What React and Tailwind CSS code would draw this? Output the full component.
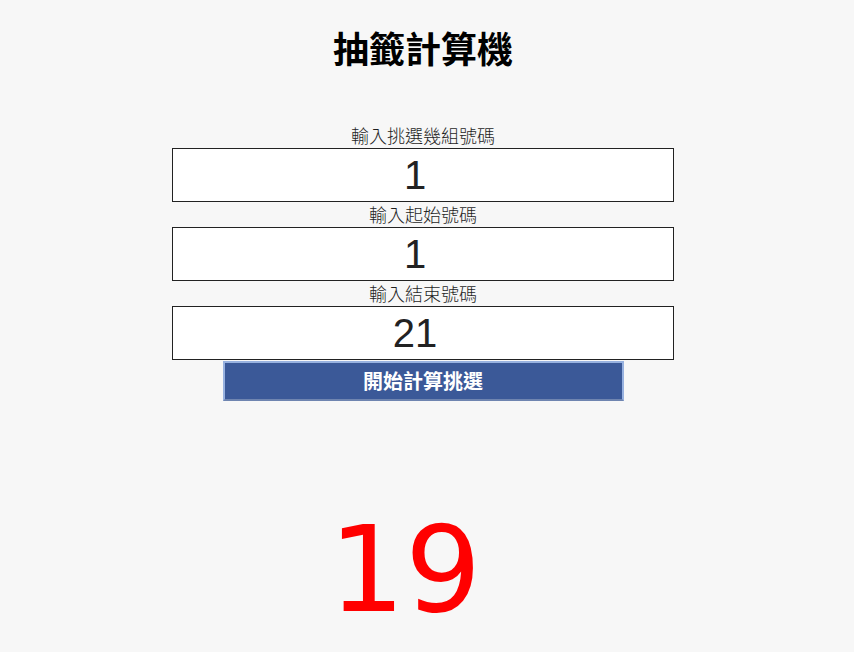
export default function App() {
  const fields = [
    { label: "輸入挑選幾組號碼", value: "1" },
    { label: "輸入起始號碼", value: "1" },
    { label: "輸入結束號碼", value: "21" },
  ];

  return (
    <main className="min-h-[652px] w-full bg-[#f7f7f7] pr-2 font-['Noto_Sans_CJK_TC',sans-serif]">
      <div className="flex flex-col items-center pt-[29px]">
        <h1 className="text-[36px] leading-[36px] font-bold text-black">
          抽籤計算機
        </h1>

        <div className="mt-[58px] flex flex-col items-center">
          {fields.map((field) => (
            <div key={field.label} className="flex flex-col items-center">
              <label className="text-[18px] leading-[25px] font-light text-[#1f1f1f]">
                {field.label}
              </label>
              <input
                type="text"
                defaultValue={field.value}
                className="h-[54px] w-[502px] border border-[#222] bg-white pr-4 text-center font-['Liberation_Sans',Arial,sans-serif] text-[40px] text-[#222] outline-none"
              />
            </div>
          ))}

          <button
            type="button"
            className="mt-px h-[40px] w-[401px] border-2 border-[#98b2e0] border-b-[#6f85b0] bg-[#3b5998] text-[20px] font-bold text-white"
          >
            開始計算挑選
          </button>
        </div>

        <div className="mt-[109px] pr-[36px] font-['DejaVu_Sans',sans-serif] text-[120px] leading-none text-[#ff0000]">
          19
        </div>
      </div>
    </main>
  );
}
